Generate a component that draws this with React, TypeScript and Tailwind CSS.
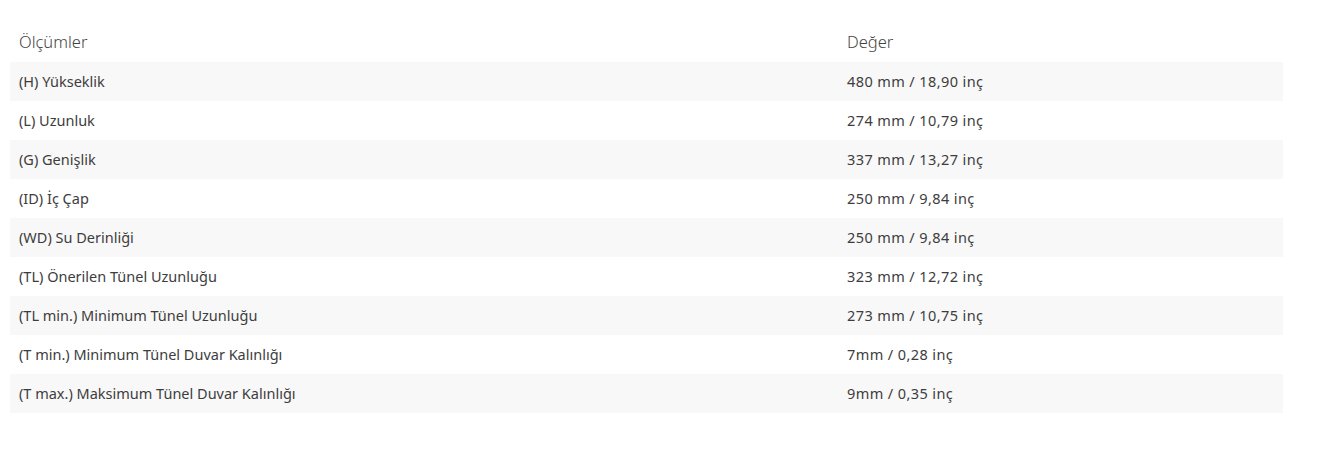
import React from "react";

const rows: [string, string][] = [
  ["(H) Yükseklik", "480 mm / 18,90 inç"],
  ["(L) Uzunluk", "274 mm / 10,79 inç"],
  ["(G) Genişlik", "337 mm / 13,27 inç"],
  ["(ID) İç Çap", "250 mm / 9,84 inç"],
  ["(WD) Su Derinliği", "250 mm / 9,84 inç"],
  ["(TL) Önerilen Tünel Uzunluğu", "323 mm / 12,72 inç"],
  ["(TL min.) Minimum Tünel Uzunluğu", "273 mm / 10,75 inç"],
  ["(T min.) Minimum Tünel Duvar Kalınlığı", "7mm / 0,28 inç"],
  ["(T max.) Maksimum Tünel Duvar Kalınlığı", "9mm / 0,35 inç"],
];

export default function App() {
  return (
    <div className="w-[1330px] h-[453px] bg-white pt-[23px] pl-[10px]">
      <table className="w-[1273px] border-collapse text-[#3d3d3d] font-['Noto_Sans',sans-serif]">
        <thead>
          <tr className="h-[39px]">
            <th className="w-[837px] text-left font-light text-[16.5px] pl-[9px] align-middle text-[#444]">Ölçümler</th>
            <th className="text-left font-light text-[16.5px] align-middle text-[#444]">Değer</th>
          </tr>
        </thead>
        <tbody>
          {rows.map(([a, b], i) => (
            <tr key={i} className={i % 2 === 0 ? "h-[39px] bg-[#f8f8f8]" : "h-[39px] bg-white"}>
              <td className="pl-[9px] text-[14.5px] align-middle">{a}</td>
              <td className="text-[14.5px] tracking-[0.4px] align-middle">{b}</td>
            </tr>
          ))}
        </tbody>
      </table>
    </div>
  );
}
